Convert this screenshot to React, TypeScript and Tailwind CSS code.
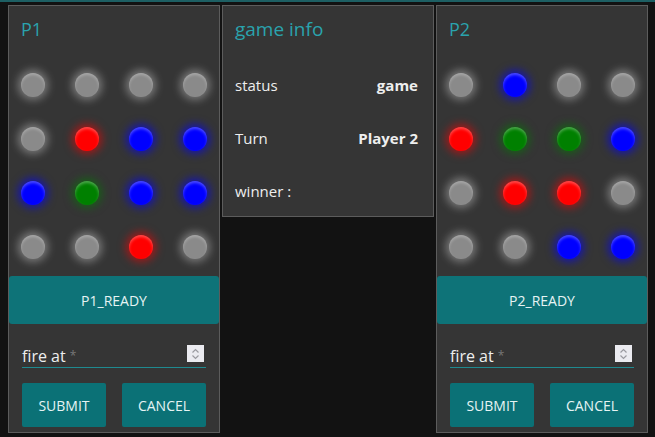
import React from 'react';

type Dot = 'g' | 'r' | 'b' | 'n';

const dotClass: Record<Dot, string> = {
  g: 'bg-[#8a8a8a] shadow-[0_0_9px_3px_rgba(255,255,255,0.35),inset_0_2px_3px_rgba(255,255,255,0.25)]',
  r: 'bg-[#ff0000] shadow-[0_0_9px_3px_rgba(255,0,0,0.55),inset_0_2px_3px_rgba(255,255,255,0.3)]',
  b: 'bg-[#0000ff] shadow-[0_0_9px_3px_rgba(0,0,255,0.6),inset_0_2px_3px_rgba(255,255,255,0.3)]',
  n: 'bg-[#008000] shadow-[0_0_9px_3px_rgba(0,128,0,0.55),inset_0_2px_3px_rgba(255,255,255,0.3)]',
};

const p1Board: Dot[] = ['g', 'g', 'g', 'g', 'g', 'r', 'b', 'b', 'b', 'n', 'b', 'b', 'g', 'g', 'r', 'g'];
const p2Board: Dot[] = ['g', 'b', 'g', 'g', 'r', 'n', 'n', 'b', 'g', 'r', 'r', 'g', 'g', 'g', 'b', 'b'];

const Spinner: React.FC = () => (
  <div className="w-[17px] h-[17px] bg-[#ebebf0] flex items-center justify-center">
    <svg width="11" height="14" viewBox="0 0 11 14" fill="none" stroke="#9a9aa0" strokeWidth="1.2">
      <path d="M2.5 5.5 L5.5 2.5 L8.5 5.5" />
      <path d="M2.5 8.5 L5.5 11.5 L8.5 8.5" />
    </svg>
  </div>
);

const PlayerPanel: React.FC<{ name: string; board: Dot[] }> = ({ name, board }) => (
  <div className="w-[212px] h-[428px] border border-[#5c5c5c] bg-[#353535] flex flex-col">
    <div className="pl-[12px] pt-[10px] h-[67px] shrink-0 text-[18px] leading-[26px] text-[#2aa3ad]">{name}</div>
    <div className="px-[12px] grid grid-cols-4 gap-x-[30px] gap-y-[30px]">
      {board.map((d, i) => (
        <div key={i} className={`w-[24px] h-[24px] rounded-full ${dotClass[d]}`} />
      ))}
    </div>
    <div className="mt-[17px] h-[48px] shrink-0 rounded-[3px] bg-[#0e7378] flex items-center justify-center text-[14px] text-[#e6f4f4]">
      {name}_READY
    </div>
    <div className="mx-[13px] mt-[20px] h-[24px] shrink-0 border-b border-[#1f8a90] flex items-center justify-between">
      <span className="text-[16px] text-[#eeeeee] leading-[22px]">
        fire at <span className="text-[#777] text-[12px] align-top">*</span>
      </span>
      <span className="mr-[2px] -mt-[4px]">
        <Spinner />
      </span>
    </div>
    <div className="mx-[13px] mt-[15px] flex justify-between">
      <button className="w-[84px] h-[44px] rounded-[2px] bg-[#0b7176] text-[14px] text-[#e6f4f4]">SUBMIT</button>
      <button className="w-[84px] h-[44px] rounded-[2px] bg-[#0b7176] text-[14px] text-[#e6f4f4]">CANCEL</button>
    </div>
  </div>
);

const InfoRow: React.FC<{ label: string; value?: string }> = ({ label, value }) => (
  <div className="h-[53px] flex items-center justify-between text-[15px] text-[#eeeeee]">
    <span>{label}</span>
    {value && <span className="font-bold">{value}</span>}
  </div>
);

export default function App() {
  return (
    <div
      className="w-[655px] h-[437px] bg-[#121212] overflow-hidden"
      style={{ fontFamily: '"Open Sans", "Noto Sans", sans-serif' }}
    >
      <div className="h-[2px] bg-[#1d5f63]" />
      <div className="flex items-start gap-[2px] pl-[8px] pt-[3px]">
        <PlayerPanel name="P1" board={p1Board} />
        <div className="w-[212px] h-[212px] border border-[#5c5c5c] bg-[#353535]">
          <div className="pl-[12px] pt-[10px] h-[53px] text-[19px] leading-[26px] text-[#2aa3ad]">game info</div>
          <div className="pl-[12px] pr-[15px]">
            <InfoRow label="status" value="game" />
            <InfoRow label="Turn" value="Player 2" />
            <InfoRow label="winner :" />
          </div>
        </div>
        <PlayerPanel name="P2" board={p2Board} />
      </div>
    </div>
  );
}
